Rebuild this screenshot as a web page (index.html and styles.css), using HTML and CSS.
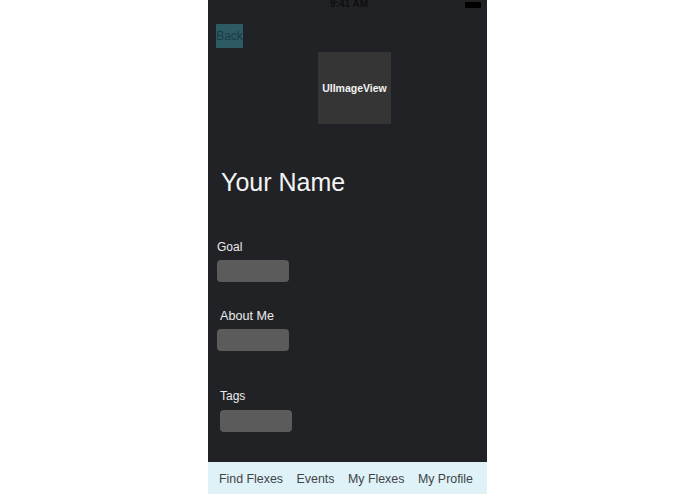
FILE: index.html
```html
<!DOCTYPE html>
<html>
<head>
<meta charset="utf-8">
<link rel="stylesheet" href="styles.css">
</head>
<body>
<div class="phone">
  <div class="status">
    <span class="time">9:41 AM</span>
    <span class="battery"></span>
  </div>
  <div class="content">
    <div class="back">Back</div>
    <div class="imageview">UIImageView</div>
    <div class="name">Your Name</div>
    <div class="label label-goal">Goal</div>
    <div class="field field-goal"></div>
    <div class="label label-about">About Me</div>
    <div class="field field-about"></div>
    <div class="label label-tags">Tags</div>
    <div class="field field-tags"></div>
  </div>
  <div class="tabbar">
    <span>Find Flexes</span>
    <span>Events</span>
    <span>My Flexes</span>
    <span>My Profile</span>
  </div>
</div>
</body>
</html>
```

FILE: styles.css
```css
html, body {
  margin: 0;
  padding: 0;
  background: #ffffff;
}
body {
  font-family: "Liberation Sans", Arial, sans-serif;
  width: 695px;
  height: 494px;
  overflow: hidden;
}
.phone {
  margin-left: 208px;
  width: 279px;
  height: 494px;
  background: #212226;
  display: flex;
  flex-direction: column;
}
.status {
  height: 10px;
  display: flex;
  justify-content: center;
  position: relative;
  overflow: hidden;
}
.time {
  font-size: 10px;
  line-height: 10px;
  font-weight: 700;
  color: #0e0e0f;
  margin-top: -1px;
  margin-left: 3px;
}
.battery {
  position: absolute;
  right: 6px;
  top: 2px;
  width: 16px;
  height: 6px;
  background: #000;
  border-radius: 1px;
}
.content {
  display: flex;
  flex-direction: column;
  align-items: flex-start;
}
.back {
  margin-top: 14px;
  margin-left: 8px;
  width: 27px;
  height: 24px;
  line-height: 24px;
  background: #2c5a65;
  color: #1b3a44;
  font-size: 12px;
  text-align: center;
  overflow: hidden;
}
.imageview {
  margin-top: 4px;
  margin-left: 110px;
  width: 73px;
  height: 72px;
  background: #353536;
  color: #f2f2f2;
  font-size: 10.5px;
  font-weight: 700;
  display: flex;
  align-items: center;
  justify-content: center;
}
.name {
  margin-top: 43px;
  margin-left: 13px;
  font-size: 25px;
  line-height: 30px;
  color: #f3f3f3;
}
.label {
  font-size: 12px;
  line-height: 14px;
  color: #ececec;
}
.label-goal {
  margin-top: 43px;
  margin-left: 9px;
}
.label-about {
  margin-top: 27px;
  margin-left: 12px;
  font-size: 12.6px;
}
.label-tags {
  margin-top: 38px;
  margin-left: 12px;
}
.field {
  width: 72px;
  height: 22px;
  border-radius: 4px;
  background: #5b5b5c;
}
.field-goal {
  margin-top: 6px;
  margin-left: 9px;
}
.field-about {
  margin-top: 6px;
  margin-left: 9px;
}
.field-tags {
  margin-top: 7px;
  margin-left: 12px;
}
.tabbar {
  margin-top: auto;
  height: 32px;
  background: #dff2f7;
  display: flex;
  gap: 13.5px;
  padding-left: 11px;
  font-size: 12.4px;
  line-height: 32px;
  padding-top: 1px;
  box-sizing: border-box;
  color: #3f4447;
}
```
